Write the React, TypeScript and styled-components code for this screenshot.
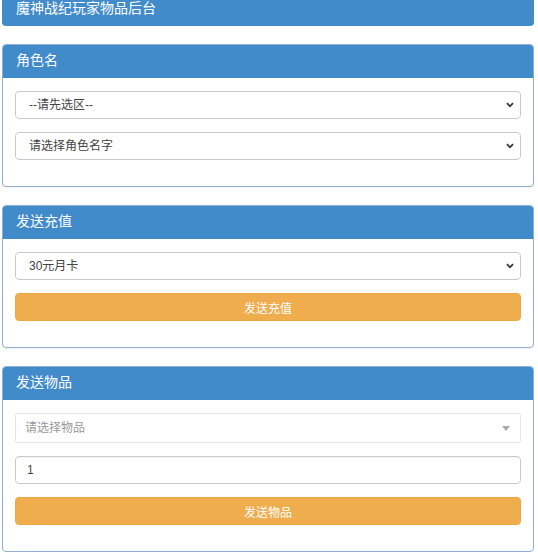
import React from "react";
import styled, { createGlobalStyle } from "styled-components";

const Global = createGlobalStyle`
  html, body { margin: 0; padding: 0; background: #fff; }
  body { font-family: "Liberation Sans", "Noto Sans CJK SC", sans-serif; }
  * { box-sizing: border-box; }
`;

const Page = styled.div`
  width: 538px;
  padding: 0 4px 0 2px;
  display: flex;
  flex-direction: column;
  gap: 18px;
`;

const TopBar = styled.div`
  height: 26px;
  background: #428bca;
  color: #fff;
  border-radius: 0 0 4px 4px;
  padding: 0 14px;
  font-size: 14px;
  line-height: 16px;
`;

const Panel = styled.section`
  border: 1px solid #8fb0d2;
  border-radius: 4px;
  background: #fff;
  box-shadow: 0 1px 1px rgba(0, 0, 0, 0.05);
  overflow: hidden;
`;

const PanelHeading = styled.div`
  height: 33px;
  background: #428bca;
  color: #fff;
  font-size: 14px;
  line-height: 31px;
  padding: 0 13px;
`;

const PanelBody = styled.div`
  padding: 13px 12px 26px;
  display: flex;
  flex-direction: column;
  gap: 13px;
`;

const Group = styled.div`
  position: relative;
`;

const Select = styled.select`
  appearance: none;
  -webkit-appearance: none;
  display: block;
  width: 100%;
  height: 28px;
  border: 1px solid #c9c9c9;
  border-radius: 4px;
  background: #fff;
  color: #444;
  font-family: "Liberation Sans", "Noto Sans CJK SC", sans-serif;
  font-size: 12px;
  padding: 0 13px;
  outline: none;
`;

const Chevron = styled.svg`
  position: absolute;
  right: 7px;
  top: 11px;
  width: 8px;
  height: 6px;
  pointer-events: none;
`;

const Select2Box = styled.div`
  height: 30px;
  border: 1px solid #e6e6e6;
  border-radius: 2px;
  background: #fff;
  color: #999;
  font-size: 12px;
  line-height: 28px;
  padding: 0 9px;
`;

const Caret = styled.span`
  position: absolute;
  right: 11px;
  top: 13px;
  width: 0;
  height: 0;
  border-style: solid;
  border-width: 5px 4px 0 4px;
  border-color: #aaa transparent transparent transparent;
`;

const Input = styled.input`
  display: block;
  width: 100%;
  height: 28px;
  border: 1px solid #c9c9c9;
  border-radius: 4px;
  color: #444;
  font-family: "Liberation Sans", "Noto Sans CJK SC", sans-serif;
  font-size: 12px;
  padding: 0 11px;
  outline: none;
  box-shadow: inset 0 1px 1px rgba(0, 0, 0, 0.05);
`;

const Button = styled.button`
  display: block;
  width: 100%;
  height: 28px;
  border: 1px solid #eea83f;
  border-radius: 4px;
  background: #f0ad4e;
  color: #fff;
  font-family: "Liberation Sans", "Noto Sans CJK SC", sans-serif;
  font-size: 12px;
  padding: 0;
  cursor: pointer;
`;

const ChevronIcon = () => (
  <Chevron viewBox="0 0 8 6">
    <path d="M1 1.2 L4 4.3 L7 1.2" fill="none" stroke="#333" strokeWidth="1.8" />
  </Chevron>
);

export default function App() {
  return (
    <Page>
      <Global />
      <TopBar>魔神战纪玩家物品后台</TopBar>

      <Panel>
        <PanelHeading>角色名</PanelHeading>
        <PanelBody>
          <Group>
            <Select defaultValue="">
              <option value="">--请先选区--</option>
            </Select>
            <ChevronIcon />
          </Group>
          <Group>
            <Select defaultValue="">
              <option value="">请选择角色名字</option>
            </Select>
            <ChevronIcon />
          </Group>
        </PanelBody>
      </Panel>

      <Panel>
        <PanelHeading>发送充值</PanelHeading>
        <PanelBody>
          <Group>
            <Select defaultValue="30">
              <option value="30">30元月卡</option>
            </Select>
            <ChevronIcon />
          </Group>
          <Button>发送充值</Button>
        </PanelBody>
      </Panel>

      <Panel>
        <PanelHeading>发送物品</PanelHeading>
        <PanelBody>
          <Group>
            <Select2Box>请选择物品</Select2Box>
            <Caret />
          </Group>
          <Input defaultValue="1" />
          <Button>发送物品</Button>
        </PanelBody>
      </Panel>
    </Page>
  );
}
